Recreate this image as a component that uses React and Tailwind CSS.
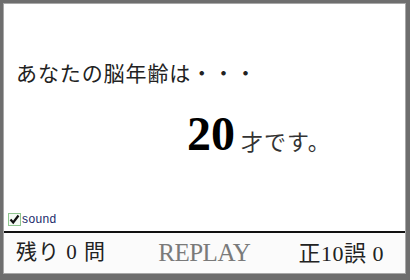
import React from "react";

export default function App() {
  const jp = { fontFamily: '"Liberation Serif", "Noto Sans CJK JP", serif' };
  return (
    <div className="w-[410px] h-[280px] bg-[#6e6e6e] pt-[3px] pl-[3px] pr-[4px] pb-[6px]">
      <div className="w-full h-full border border-[#a8a8a8] bg-white flex flex-col">
        <div className="flex-1 flex flex-col relative">
          <div className="pl-[12px] pt-[57px] text-[21px] leading-[26px] text-[#222] tracking-[0.9px]" style={jp}>
            あなたの脳年齢は・・・
          </div>
          <div className="flex items-baseline pl-[183px] mt-[21px]" style={jp}>
            <span className="text-[48px] leading-[52px] font-bold text-black">20</span>
            <span className="ml-[6px] text-[22px] text-[#333] tracking-[1px]">才です。</span>
          </div>
          <div className="mt-auto mb-[5px] ml-[4px] flex items-center gap-[1px]">
            <span className="w-[13px] h-[13px] border border-[#8fc58f] bg-[#f4fbf4] flex items-center justify-center">
              <svg width="11" height="11" viewBox="0 0 11 11">
                <path d="M1.5 5.5 L4.2 8.5 L9.5 1.5" stroke="#111" strokeWidth="2.2" fill="none" />
              </svg>
            </span>
            <span className="text-[12px] leading-[13px] text-[#1a2a6a] tracking-[0.4px]" style={{ fontFamily: '"Liberation Sans", Arial, sans-serif' }}>sound</span>
          </div>
        </div>
        <div className="h-[2px] bg-[#111]" />
        <div className="h-[40px] bg-[#fbfbfb] flex items-center justify-between pl-[12px] pr-[21px]" style={jp}>
          <span className="text-[21px] text-[#222] tracking-[1px]">残り 0 問</span>
          <span className="text-[25px] text-[#7a7a7a] ml-[4px] tracking-[-0.5px]">REPLAY</span>
          <span className="text-[22px] text-[#222] tracking-[0.5px]">正10誤 0</span>
        </div>
      </div>
    </div>
  );
}
